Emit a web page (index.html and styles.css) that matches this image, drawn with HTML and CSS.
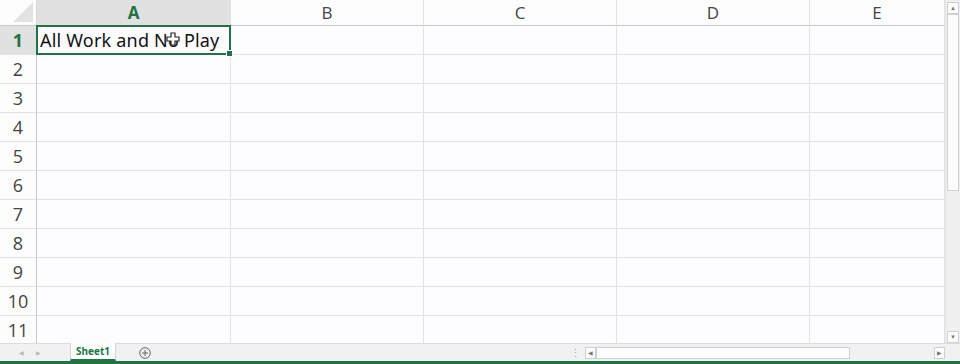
FILE: index.html
```html
<!DOCTYPE html>
<html lang="en">
<head>
  <meta charset="UTF-8">
  <title>Book1 - Excel</title>
  <link rel="stylesheet" href="styles.css">
</head>
<body>
  <div class="workspace">
    <!-- Hoja de cálculo -->
    <div class="sheet">
      <div class="corner"><span class="corner-tri"></span></div>
      <div class="col-head selected">A</div>
      <div class="col-head">B</div>
      <div class="col-head">C</div>
      <div class="col-head">D</div>
      <div class="col-head">E</div>

      <div class="row-head selected">1</div>
      <div class="cell active">
        <span class="cell-text">All Work and No Play</span>
        <span class="selection"><span class="handle"></span></span>
        <svg class="cursor" width="14" height="14" viewBox="0 0 14 14">
          <path d="M5 1h4v4h4v4H9v4H5V9H1V5h4z" fill="#fff" stroke="#222" stroke-width="1.2"/>
        </svg>
      </div>
      <div class="cell"></div><div class="cell"></div><div class="cell"></div><div class="cell"></div>

      <div class="row-head">2</div><div class="cell"></div><div class="cell"></div><div class="cell"></div><div class="cell"></div><div class="cell"></div>
      <div class="row-head">3</div><div class="cell"></div><div class="cell"></div><div class="cell"></div><div class="cell"></div><div class="cell"></div>
      <div class="row-head">4</div><div class="cell"></div><div class="cell"></div><div class="cell"></div><div class="cell"></div><div class="cell"></div>
      <div class="row-head">5</div><div class="cell"></div><div class="cell"></div><div class="cell"></div><div class="cell"></div><div class="cell"></div>
      <div class="row-head">6</div><div class="cell"></div><div class="cell"></div><div class="cell"></div><div class="cell"></div><div class="cell"></div>
      <div class="row-head">7</div><div class="cell"></div><div class="cell"></div><div class="cell"></div><div class="cell"></div><div class="cell"></div>
      <div class="row-head">8</div><div class="cell"></div><div class="cell"></div><div class="cell"></div><div class="cell"></div><div class="cell"></div>
      <div class="row-head">9</div><div class="cell"></div><div class="cell"></div><div class="cell"></div><div class="cell"></div><div class="cell"></div>
      <div class="row-head">10</div><div class="cell"></div><div class="cell"></div><div class="cell"></div><div class="cell"></div><div class="cell"></div>
      <div class="row-head">11</div><div class="cell"></div><div class="cell"></div><div class="cell"></div><div class="cell"></div><div class="cell"></div>
    </div>

    <!-- Barra de desplazamiento vertical -->
    <div class="vscroll">
      <div class="arrow-btn">&#9650;</div>
      <div class="vthumb"></div>
      <div class="vtrack"></div>
      <div class="arrow-btn">&#9660;</div>
    </div>
  </div>

  <!-- Pestañas de hojas y barra horizontal -->
  <div class="tabbar">
    <div class="nav-arrows">
      <span>&#9664;</span>
      <span>&#9654;</span>
    </div>
    <div class="tab">Sheet1</div>
    <div class="add-sheet">
      <svg width="12" height="12" viewBox="0 0 12 12">
        <circle cx="6" cy="6" r="5.3" fill="none" stroke="#666" stroke-width="1"/>
        <path d="M6 3v6M3 6h6" stroke="#666" stroke-width="1"/>
      </svg>
    </div>
    <div class="spacer"></div>
    <div class="grip">&#8942;</div>
    <div class="hscroll">
      <div class="arrow-btn small">&#9664;</div>
      <div class="hthumb"></div>
      <div class="htrack"></div>
      <div class="arrow-btn small">&#9654;</div>
    </div>
    <div class="tab-end"></div>
  </div>
  <div class="status-line"></div>
</body>
</html>
```

FILE: styles.css
```css
/* Página completa tipo Excel */
html, body {
  margin: 0;
  padding: 0;
  width: 960px;
  height: 364px;
  overflow: hidden;
  background-color: #fcfbfd;
  font-family: 'Open Sans', 'Noto Sans', sans-serif;
  color: #444;
}

.workspace {
  display: flex;
  height: 343px;
  overflow: hidden;
}

/* Rejilla de celdas */
.sheet {
  flex: 1;
  display: grid;
  grid-template-columns: 37px 194px 193px 193px 193px 135px;
  grid-auto-rows: 29px;
  grid-template-rows: 26px;
  overflow: hidden;
  background-color: #fdfcfe;
}

.corner {
  position: relative;
  border-right: 1px solid #d8d8d8;
  border-bottom: 1px solid #c9c9c9;
  box-sizing: border-box;
  background-color: #fdfdfd;
}
.corner-tri {
  position: absolute;
  right: 3px;
  bottom: 3px;
  width: 0;
  height: 0;
  border-left: 20px solid transparent;
  border-bottom: 20px solid #e3e3e3;
}

.col-head {
  display: flex;
  align-items: center;
  justify-content: center;
  font-size: 17px;
  color: #444;
  border-right: 1px solid #e2e2e2;
  border-bottom: 1px solid #c9c9c9;
  box-sizing: border-box;
  background-color: #fdfdfd;
}
.col-head.selected {
  background-color: #e1e1e1;
  color: #217346;
  font-weight: 700;
}

.row-head {
  display: flex;
  align-items: center;
  justify-content: center;
  font-size: 18px;
  color: #444;
  border-right: 1px solid #c9c9c9;
  border-bottom: 1px solid #e2e2e2;
  box-sizing: border-box;
  background-color: #fdfdfd;
}
.row-head.selected {
  background-color: #e1e1e1;
  color: #217346;
  font-weight: 700;
}

.cell {
  border-right: 1px solid #e2e2e2;
  border-bottom: 1px solid #e2e2e2;
  box-sizing: border-box;
}
.cell.active {
  position: relative;
  display: flex;
  align-items: center;
  overflow: visible;
}
.cell-text {
  padding-left: 3px;
  font-family: 'Noto Sans', sans-serif;
  font-size: 18px;
  color: #111;
  white-space: nowrap;
  letter-spacing: 0.2px;
}

/* Recuadro de selección de la celda activa */
.selection {
  position: absolute;
  left: -1px;
  top: -1px;
  right: -1px;
  bottom: -1px;
  border: 2px solid #217346;
  pointer-events: none;
}
.handle {
  position: absolute;
  right: -4px;
  bottom: -4px;
  width: 5px;
  height: 5px;
  background-color: #217346;
  border: 1px solid #fff;
}
.cursor {
  position: absolute;
  left: 129px;
  top: 6px;
}

/* Barra vertical */
.vscroll {
  width: 15px;
  display: flex;
  flex-direction: column;
  background-color: #f0f0f0;
  border-left: 1px solid #e6e6e6;
  box-sizing: border-box;
  padding: 2px 1px 0;
}
.arrow-btn {
  height: 10px;
  font-size: 6px;
  color: #777;
  text-align: center;
  line-height: 10px;
  border: 1px solid #cfcfcf;
  background-color: #fdfdfd;
}
.vthumb {
  height: 175px;
  border: 1px solid #cfcfcf;
  background-color: #fdfdfd;
}
.vtrack {
  flex: 1;
}

/* Barra de pestañas */
.tabbar {
  display: flex;
  align-items: stretch;
  height: 18px;
  background-color: #f1f1f1;
  border-top: 1px solid #dcdcdc;
  box-sizing: border-box;
}
.nav-arrows {
  width: 70px;
  display: flex;
  align-items: center;
  gap: 12px;
  padding-left: 19px;
  box-sizing: border-box;
  font-size: 6px;
  color: #b8b8b8;
}
.tab {
  width: 46px;
  margin-top: -1px;
  background-color: #fff;
  color: #217346;
  font-family: 'Noto Sans', sans-serif;
  font-size: 10px;
  font-weight: 700;
  text-align: center;
  line-height: 16px;
  border-left: 1px solid #d4d4d4;
  border-right: 1px solid #d4d4d4;
  border-bottom: 2px solid #217346;
  box-sizing: border-box;
}
.add-sheet {
  margin-left: 23px;
  display: flex;
  align-items: center;
}
.spacer {
  flex: 1;
}
.grip {
  width: 14px;
  font-size: 11px;
  color: #aaa;
  line-height: 17px;
  text-align: center;
  margin-right: 3px;
}
.hscroll {
  width: 360px;
  display: flex;
  align-items: center;
}
.arrow-btn.small {
  width: 9px;
  height: 10px;
  padding: 0;
}
.hthumb {
  width: 252px;
  height: 10px;
  border: 1px solid #cfcfcf;
  background-color: #fdfdfd;
}
.htrack {
  flex: 1;
}
.tab-end {
  width: 15px;
}

.status-line {
  height: 3px;
  background-color: #217346;
}
```
